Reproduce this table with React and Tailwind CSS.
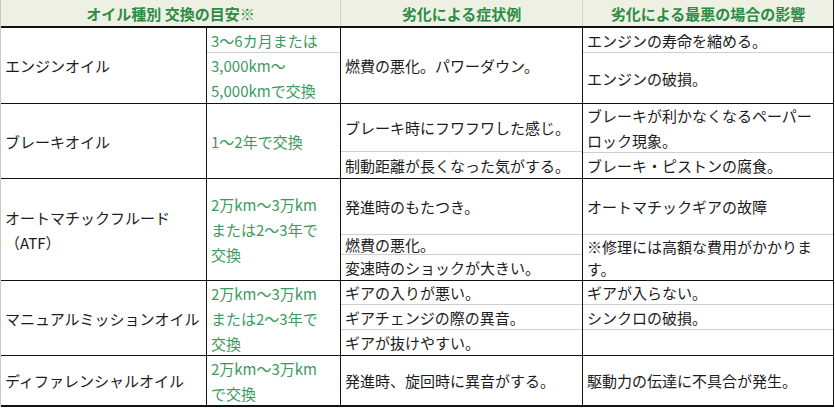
import React from "react";

const font = { fontFamily: '"Noto Sans CJK JP", "Noto Sans", sans-serif' };

const Sub = ({ h, last, children, green }) => (
  <div
    className={`flex flex-col justify-center px-1 whitespace-nowrap ${last ? "" : "border-b border-[#cfcfcf]"} ${green ? "text-[#3d9a5e]" : ""}`}
    style={{ height: h }}
  >
    {children}
  </div>
);

const Col = ({ w, border = true, children }) => (
  <div className={`flex flex-col ${border ? "border-r border-[#111]" : ""} ${w}`}>{children}</div>
);

const rows = [
  {
    h: 76,
    name: "エンジンオイル",
    term: [
      { h: 25, t: "3〜6カ月または" },
      { h: 50, t: <>3,000km〜<br />5,000kmで交換</> },
    ],
    symptom: [{ h: 75, t: "燃費の悪化。パワーダウン。" }],
    effect: [
      { h: 25, t: "エンジンの寿命を縮める。" },
      { h: 50, t: "エンジンの破損。" },
    ],
  },
  {
    h: 75,
    name: "ブレーキオイル",
    term: [{ h: 74, t: "1〜2年で交換" }],
    symptom: [
      { h: 48, t: "ブレーキ時にフワフワした感じ。" },
      { h: 26, t: "制動距離が長くなった気がする。" },
    ],
    effect: [
      { h: 49, t: <>ブレーキが利かなくなるペーパー<br />ロック現象。</> },
      { h: 25, t: "ブレーキ・ピストンの腐食。" },
    ],
  },
  {
    h: 102,
    name: <>オートマチックフルード<br />（ATF）</>,
    term: [{ h: 101, t: <>2万km〜3万km<br />または2〜3年で<br />交換</> }],
    symptom: [
      { h: 56, t: "発進時のもたつき。" },
      { h: 20, t: "燃費の悪化。" },
      { h: 25, t: "変速時のショックが大きい。" },
    ],
    effect: [
      { h: 56, t: "オートマチックギアの故障" },
      { h: 45, t: <span className="leading-[22px]">※修理には高額な費用がかかりま<br />す。</span> },
    ],
  },
  {
    h: 75,
    name: "マニュアルミッションオイル",
    term: [{ h: 74, t: <>2万km〜3万km<br />または2〜3年で<br />交換</> }],
    symptom: [
      { h: 24, t: "ギアの入りが悪い。" },
      { h: 25, t: "ギアチェンジの際の異音。" },
      { h: 25, t: "ギアが抜けやすい。" },
    ],
    effect: [
      { h: 24, t: "ギアが入らない。" },
      { h: 25, t: "シンクロの破損。" },
      { h: 25, t: "" },
    ],
  },
  {
    h: 51,
    name: "ディファレンシャルオイル",
    term: [{ h: 49, t: <>2万km〜3万km<br />で交換</> }],
    symptom: [{ h: 49, t: "発進時、旋回時に異音がする。" }],
    effect: [{ h: 49, t: "駆動力の伝達に不具合が発生。" }],
  },
];

const App = () => {
  return (
    <div className="w-[835px] h-[409px] bg-white text-[15px] leading-[25px] text-[#1c1c1c]" style={font}>
      <div className="w-[834px] border-l border-[#c8c8c8] border-r border-r-[#111]">
        {/* Header */}
        <div className="flex h-[28px] bg-[#eef0e3] border-b-2 border-[#111] font-bold text-[#2c8c45]">
          <div className="w-[340px] flex items-center justify-center border-r border-[#d2d2d2]">オイル種別 交換の目安※</div>
          <div className="w-[242px] flex items-center justify-center border-r border-[#d2d2d2]">劣化による症状例</div>
          <div className="flex-1 flex items-center justify-center">劣化による最悪の場合の影響</div>
        </div>

        {rows.map((r, i) => (
          <div
            key={i}
            className={`flex ${i === rows.length - 1 ? "border-b-2" : "border-b"} border-[#111]`}
            style={{ height: r.h }}
          >
            <Col w="w-[206px]">
              <div className="flex-1 flex flex-col justify-center px-1 whitespace-nowrap">{r.name}</div>
            </Col>
            <Col w="w-[134px]">
              {r.term.map((s, j) => (
                <Sub key={j} h={s.h} green last={j === r.term.length - 1}>{s.t}</Sub>
              ))}
            </Col>
            <Col w="w-[242px]">
              {r.symptom.map((s, j) => (
                <Sub key={j} h={s.h} last={j === r.symptom.length - 1}>{s.t}</Sub>
              ))}
            </Col>
            <Col w="flex-1" border={false}>
              {r.effect.map((s, j) => (
                <Sub key={j} h={s.h} last={j === r.effect.length - 1}>{s.t}</Sub>
              ))}
            </Col>
          </div>
        ))}
      </div>
    </div>
  );
};

export default App;
